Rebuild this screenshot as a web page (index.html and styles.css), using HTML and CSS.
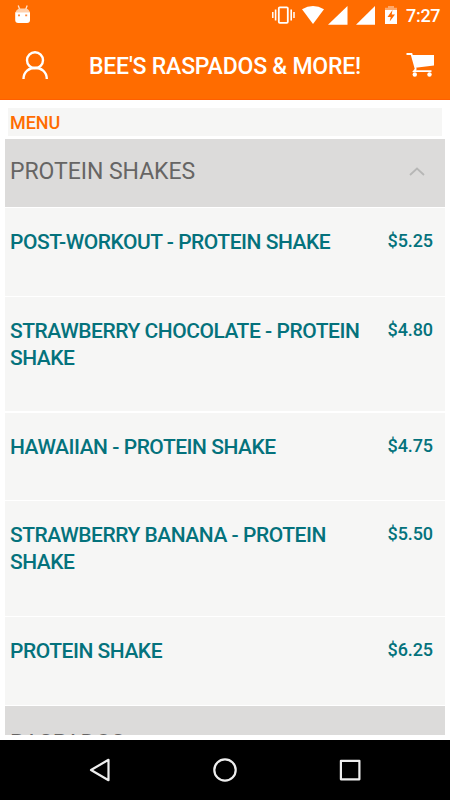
FILE: index.html
```html
<!DOCTYPE html>
<html lang="en">
<head>
  <meta charset="utf-8">
  <title>Bee's Raspados & More!</title>
  <link rel="stylesheet" href="styles.css">
</head>
<body>
  <div class="app">
    <div class="status-bar">
      <svg class="debug-icon" width="18" height="19" viewBox="0 0 18 19">
        <path d="M4.2 0.5L6 5M13.2 0.5L11.5 5" stroke="#ffe3cf" stroke-width="1.3"/>
        <path d="M1.2 8Q2 4.5 5 3.5h7.5q3 1 3.5 4.5z" fill="#ffd0ac"/>
        <path d="M1.2 7.5h14.8v7.5q0 3-3 3h-8.8q-3 0-3-3z" fill="#fff"/>
        <path d="M4 9.500h2v1.8H4zM11.2 9.500h2v1.8h-2z" fill="#ff8a3c"/>
      </svg>
      <div class="status-icons">
        <svg width="134" height="30" viewBox="0 0 134 30">
          <g fill="none" stroke="#fff">
            <rect x="6.8" y="7.3" width="9" height="15.5" rx="1" stroke-width="1.8"/>
            <path d="M3.6 9.5v11M19.2 9.5v11" stroke-width="1.6"/>
            <path d="M0.8 12v6M22 12v6" stroke-width="1.5"/>
          </g>
          <g fill="#fff">
            <path d="M30 9.3Q35.5 6 41 6t11 3.3L41 24z"/>
            <path d="M56 24.7L75.5 6v18.7z"/>
            <path d="M84 24.7L103 6v18.7z"/>
            <path d="M113 9h12v15h-12z"/>
          </g>
          <path d="M116 6h6v1.7h3V10h-12V7.7h3z" fill="#ffa869"/>
          <path d="M120.5 10l-5 7h3.2l-1 4.5 5.3-7h-3.3z" fill="#ff6c00"/>
        </svg>
        <span class="clock">7:27</span>
      </div>
    </div>

    <div class="header">
      <svg width="28" height="30" viewBox="0 0 28 30" fill="none" stroke="#fff" stroke-width="2.4">
        <circle cx="13" cy="10.2" r="8"/>
        <path d="M1.5 29C1.5 14 24.8 14 24.8 29"/>
      </svg>
      <h1>BEE'S RASPADOS &amp; MORE!</h1>
      <svg class="cart" width="29" height="26" viewBox="0 0 29 26">
        <path d="M0.5 2h5l4.2 15-1.7 2.2H25.500" fill="none" stroke="#fff" stroke-width="1.8"/>
        <path d="M6 3h22v10.500L9.500 15.8z" fill="#fff"/>
        <circle cx="8.8" cy="22.5" r="2.2" fill="#fff"/>
        <circle cx="23.5" cy="22.5" r="2.2" fill="#fff"/>
      </svg>
    </div>

    <div class="content">
      <div class="menu-title">MENU</div>
      <div class="section">
        <span>PROTEIN SHAKES</span>
        <svg width="16" height="10" viewBox="0 0 16 10" fill="none" stroke="#b7b7b6" stroke-width="1.8">
          <path d="M1 8L8 1.5l7 6.5"/>
        </svg>
      </div>
      <div class="item">
        <span class="name">POST-WORKOUT - PROTEIN SHAKE</span>
        <span class="price">$5.25</span>
      </div>
      <div class="item">
        <span class="name">STRAWBERRY CHOCOLATE - PROTEIN SHAKE</span>
        <span class="price">$4.80</span>
      </div>
      <div class="item">
        <span class="name">HAWAIIAN - PROTEIN SHAKE</span>
        <span class="price">$4.75</span>
      </div>
      <div class="item">
        <span class="name">STRAWBERRY BANANA - PROTEIN SHAKE</span>
        <span class="price">$5.50</span>
      </div>
      <div class="item">
        <span class="name">PROTEIN SHAKE</span>
        <span class="price">$6.25</span>
      </div>
      <div class="section">
        <span>RASPADOS</span>
      </div>
    </div>

    <div class="nav-bar">
      <svg width="24" height="26" viewBox="0 0 24 26">
        <path d="M3 13L20.5 2.8v20.4z"/>
      </svg>
      <svg width="26" height="26" viewBox="0 0 26 26">
        <circle cx="13" cy="13" r="10.7"/>
      </svg>
      <svg width="24" height="26" viewBox="0 0 24 26">
        <rect x="2.9" y="3.8" width="18.5" height="18.5"/>
      </svg>
    </div>
  </div>
</body>
</html>
```
FILE: styles.css
```css
* {
  box-sizing: border-box;
}

body {
  margin: 0;
  background-color: #ffffff;
  font-family: Roboto, "Liberation Sans", sans-serif;
}

svg {
  display: block;
  flex-shrink: 0;
}

.app {
  width: 450px;
  height: 800px;
  display: flex;
  flex-direction: column;
  overflow: hidden;
}

.status-bar {
  height: 30px;
  flex-shrink: 0;
  display: flex;
  align-items: center;
  justify-content: space-between;
  padding: 0 0 0 14px;
  background-color: #ff6c00;
}

.debug-icon {
  margin-bottom: 2px;
}

.status-icons {
  width: 178px;
  height: 30px;
  display: flex;
  color: #ffffff;
}

.clock {
  font-size: 18px;
  font-weight: 500;
  line-height: 31px;
  letter-spacing: -0.3px;
  white-space: nowrap;
}

.header {
  height: 70px;
  flex-shrink: 0;
  display: flex;
  align-items: center;
  padding: 0 15px 0 22px;
  background-color: #ff6c00;
  border-bottom: 1px solid #ff5f00;
}

.header h1 {
  margin: 0 auto 0 39px;
  padding-top: 4px;
  color: #ffffff;
  font-size: 23px;
  font-weight: 500;
  letter-spacing: -0.2px;
  white-space: nowrap;
}

.content {
  height: 635px;
  flex-shrink: 0;
  margin-bottom: 5px;
  padding: 8px 5px 0;
  overflow: hidden;
}

.menu-title {
  height: 28px;
  margin: 0 3px 3px;
  padding-left: 2px;
  background-color: #f6f6f5;
  color: #ff6c00;
  font-size: 18px;
  font-weight: 500;
  line-height: 29px;
  letter-spacing: -0.1px;
}

.section {
  height: 68px;
  display: flex;
  align-items: center;
  justify-content: space-between;
  padding: 0 20px 3px 5px;
  background-color: #dcdbda;
  color: #666564;
  font-size: 23px;
  letter-spacing: -0.05px;
}

.item {
  display: flex;
  justify-content: space-between;
  align-items: flex-start;
  margin-top: 1px;
  padding: 20px 12px 40.5px 5px;
  background-color: #f6f6f5;
  color: #04727c;
  font-weight: 500;
  line-height: 27px;
}

.item + .item {
  margin-top: 1.3px;
}

.item + .section {
  margin-top: 1.5px;
  padding-top: 6px;
  padding-bottom: 0;
}

.name {
  width: 355px;
  padding-top: 1px;
  margin-bottom: -1px;
  font-size: 21px;
  letter-spacing: -0.47px;
}

.price {
  font-size: 18px;
  line-height: 25px;
  letter-spacing: -0.1px;
}

.nav-bar {
  height: 60px;
  flex-shrink: 0;
  display: flex;
  align-items: center;
  justify-content: space-between;
  padding: 0 88px;
  background-color: #000000;
  fill: none;
  stroke: #eeeeee;
  stroke-width: 2.2;
  stroke-linejoin: round;
}
```
